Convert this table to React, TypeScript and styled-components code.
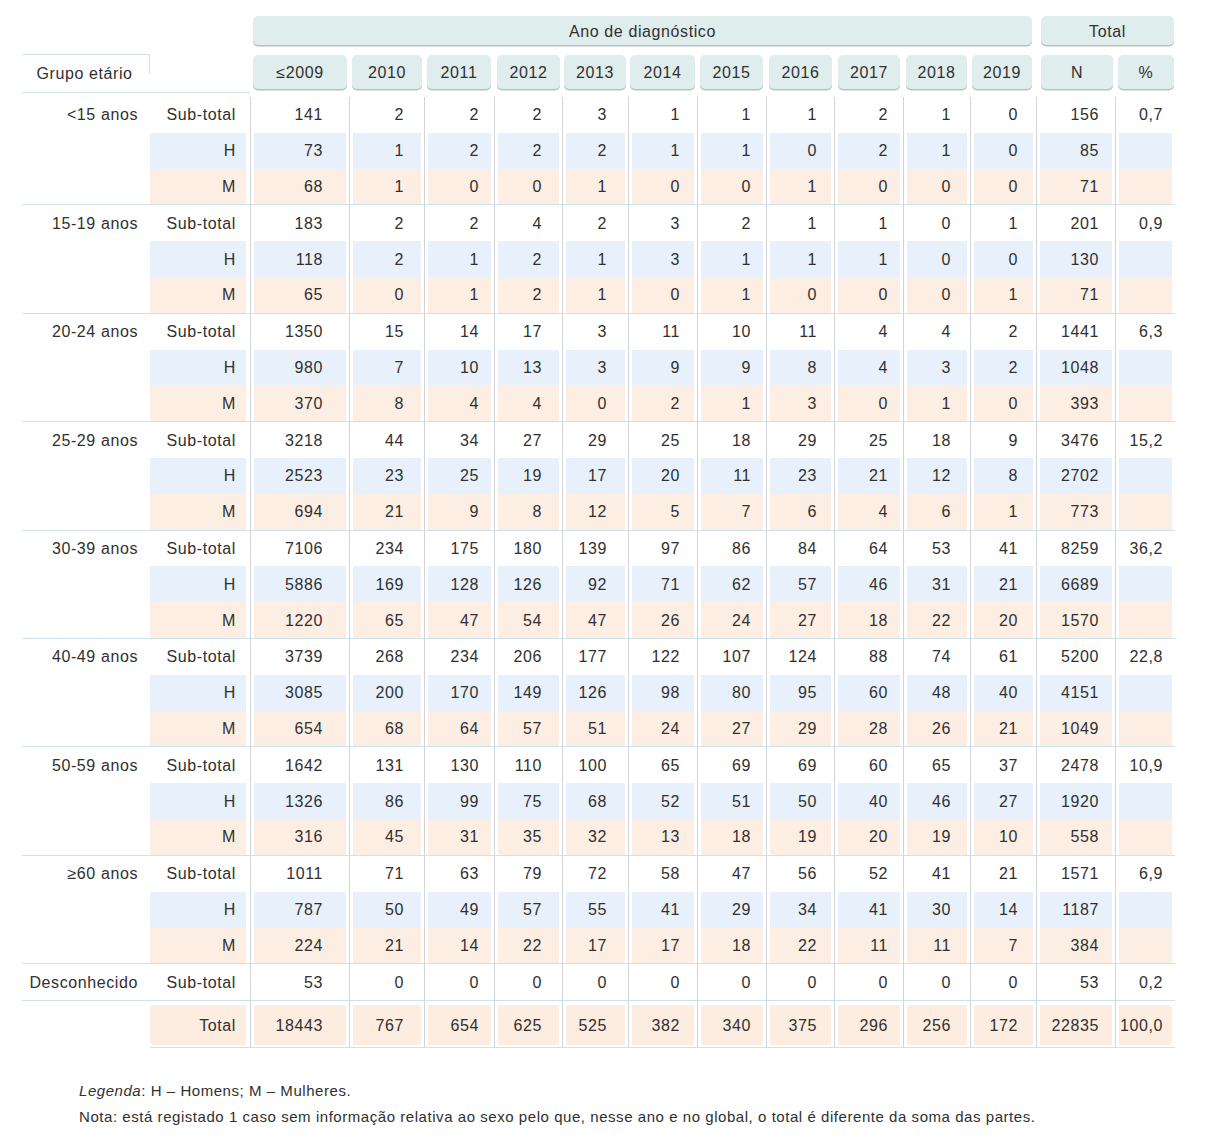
import React from 'react';
import styled, { createGlobalStyle } from 'styled-components';

const GlobalStyle = createGlobalStyle`
  body {
    margin: 0;
    background: #ffffff;
    font-family: "Liberation Sans", Arial, sans-serif;
    color: #303030;
  }
`;

const COLS = '128px 100px 99px 75px 70px 68px 66px 69px 69px 68px 69px 67px 66px 79px 60px';

const YEARS = ['≤2009', '2010', '2011', '2012', '2013', '2014', '2015', '2016', '2017', '2018', '2019', 'N', '%'];
// right padding of the numbers, measured from the column's right edge
const PAD = [26, 20, 15, 20, 21, 17, 15, 17, 15, 19, 18, 16, 12];
// pill insets inside each column [left, right]
const INSET: [number, number][] = [
  [3, 2], [3, 2], [3, 3], [3, 2], [2, 2], [2, 2], [3, 3], [3, 2], [4, 3], [3, 3], [2, 4], [5, 2], [3, 1],
];

const LINE = '#cfe1eb';
const DIVIDER = '#d2d6d9';
const BG = { sub: 'transparent', h: '#e8f1fb', m: '#fdeee3', total: '#fdece0' };

type Kind = 'sub' | 'h' | 'm';

const groups: { label: string; rows: (string | number)[][] }[] = [
  {
    label: '<15 anos',
    rows: [
      [141, 2, 2, 2, 3, 1, 1, 1, 2, 1, 0, 156, '0,7'],
      [73, 1, 2, 2, 2, 1, 1, 0, 2, 1, 0, 85, ''],
      [68, 1, 0, 0, 1, 0, 0, 1, 0, 0, 0, 71, ''],
    ],
  },
  {
    label: '15-19 anos',
    rows: [
      [183, 2, 2, 4, 2, 3, 2, 1, 1, 0, 1, 201, '0,9'],
      [118, 2, 1, 2, 1, 3, 1, 1, 1, 0, 0, 130, ''],
      [65, 0, 1, 2, 1, 0, 1, 0, 0, 0, 1, 71, ''],
    ],
  },
  {
    label: '20-24 anos',
    rows: [
      [1350, 15, 14, 17, 3, 11, 10, 11, 4, 4, 2, 1441, '6,3'],
      [980, 7, 10, 13, 3, 9, 9, 8, 4, 3, 2, 1048, ''],
      [370, 8, 4, 4, 0, 2, 1, 3, 0, 1, 0, 393, ''],
    ],
  },
  {
    label: '25-29 anos',
    rows: [
      [3218, 44, 34, 27, 29, 25, 18, 29, 25, 18, 9, 3476, '15,2'],
      [2523, 23, 25, 19, 17, 20, 11, 23, 21, 12, 8, 2702, ''],
      [694, 21, 9, 8, 12, 5, 7, 6, 4, 6, 1, 773, ''],
    ],
  },
  {
    label: '30-39 anos',
    rows: [
      [7106, 234, 175, 180, 139, 97, 86, 84, 64, 53, 41, 8259, '36,2'],
      [5886, 169, 128, 126, 92, 71, 62, 57, 46, 31, 21, 6689, ''],
      [1220, 65, 47, 54, 47, 26, 24, 27, 18, 22, 20, 1570, ''],
    ],
  },
  {
    label: '40-49 anos',
    rows: [
      [3739, 268, 234, 206, 177, 122, 107, 124, 88, 74, 61, 5200, '22,8'],
      [3085, 200, 170, 149, 126, 98, 80, 95, 60, 48, 40, 4151, ''],
      [654, 68, 64, 57, 51, 24, 27, 29, 28, 26, 21, 1049, ''],
    ],
  },
  {
    label: '50-59 anos',
    rows: [
      [1642, 131, 130, 110, 100, 65, 69, 69, 60, 65, 37, 2478, '10,9'],
      [1326, 86, 99, 75, 68, 52, 51, 50, 40, 46, 27, 1920, ''],
      [316, 45, 31, 35, 32, 13, 18, 19, 20, 19, 10, 558, ''],
    ],
  },
  {
    label: '≥60 anos',
    rows: [
      [1011, 71, 63, 79, 72, 58, 47, 56, 52, 41, 21, 1571, '6,9'],
      [787, 50, 49, 57, 55, 41, 29, 34, 41, 30, 14, 1187, ''],
      [224, 21, 14, 22, 17, 17, 18, 22, 11, 11, 7, 384, ''],
    ],
  },
];

const unknownRow = [53, 0, 0, 0, 0, 0, 0, 0, 0, 0, 0, 53, '0,2'];
const totalRow = [18443, 767, 654, 625, 525, 382, 340, 375, 296, 256, 172, 22835, '100,0'];

const Page = styled.div`
  width: 1206px;
  box-sizing: border-box;
  padding: 16px 0 0 22px;
  font-size: 16px;
  letter-spacing: 0.6px;
`;

const Table = styled.div`
  width: 1153px;
`;

const Row = styled.div`
  display: grid;
  grid-template-columns: ${COLS};
`;

const TopHeader = styled(Row)`
  height: 30px;
  margin-bottom: 8px;
`;

const SubHeader = styled(Row)`
  height: 39px;
`;

const Pill = styled.div<{ $from: number; $to: number; $ml: number; $mr: number }>`
  grid-column: ${(p) => p.$from} / ${(p) => p.$to};
  margin: 0 ${(p) => p.$mr}px 1.5px ${(p) => p.$ml}px;
  padding-top: 3px;
  background: #e0eded;
  border-radius: 5px;
  box-shadow: 0 1.5px 0 #b8c1c1;
  display: flex;
  align-items: center;
  justify-content: center;
`;

const PillCell = styled.div<{ $ml: number; $mr: number }>`
  padding: 1px ${(p) => p.$mr}px 4px ${(p) => p.$ml}px;
  display: flex;
`;

const SmallPill = styled.div`
  flex: 1;
  background: #e0eded;
  border-radius: 5px;
  box-shadow: 0 1.5px 0 #b8c1c1;
  display: flex;
  align-items: center;
  justify-content: center;
  padding-top: 1px;
`;

const GroupTitle = styled.div`
  position: relative;
  border-top: 1px solid ${LINE};
  border-bottom: 1px solid ${LINE};
  display: flex;
  align-items: center;
  justify-content: center;
  padding-right: 3px;

  &::after {
    content: '';
    position: absolute;
    top: 0;
    right: 0;
    width: 1px;
    height: 19px;
    background: ${LINE};
  }
`;

const HeaderBlank = styled.div`
  border-bottom: 1px solid ${LINE};
`;

const Body = styled.div`
  padding-top: 4px;
`;

const Group = styled.div<{ $first?: boolean; $closed?: boolean }>`
  border-top: ${(p) => (p.$first ? 'none' : `1px solid ${LINE}`)};
  border-bottom: ${(p) => (p.$closed ? `1px solid ${LINE}` : 'none')};
`;

const DataRow = styled(Row)<{ $h: number }>`
  height: ${(p) => p.$h}px;
`;

const GroupLabel = styled.div`
  display: flex;
  align-items: center;
  justify-content: flex-end;
  padding: 1px 12px 0 0;
  white-space: nowrap;
`;

const SubLabelCell = styled.div`
  display: flex;
  padding-right: 4px;
`;

const DataCell = styled.div`
  display: flex;
  border-left: 1px solid ${DIVIDER};
  padding: 0 3px;
`;

const Fill = styled.div<{ $bg: string; $pr: number }>`
  flex: 1;
  display: flex;
  align-items: center;
  justify-content: flex-end;
  padding: 1px ${(p) => p.$pr}px 0 0;
  background: ${(p) => p.$bg};
  white-space: nowrap;
`;

const TotalRow = styled(Row)`
  height: 47px;
`;

const TotalLabelCell = styled.div`
  display: flex;
  padding: 4px 4px 2px 0;
  border-bottom: 1px solid ${LINE};
`;

const TotalCell = styled(DataCell)`
  padding: 4px 3px 2px;
  border-bottom: 1px solid ${LINE};
`;

const TotalFill = styled(Fill)<{ $round?: 'left' | 'right' }>`
  border-radius: ${(p) => (p.$round === 'left' ? '4px 0 0 4px' : p.$round === 'right' ? '0 4px 4px 0' : '0')};
`;

const Notes = styled.div`
  margin-top: 30px;
  padding-left: 57px;
  font-size: 15px;
  line-height: 26px;
  letter-spacing: 0.55px;
`;

const SUBLABEL: Record<Kind, string> = { sub: 'Sub-total', h: 'H', m: 'M' };
const KINDS: Kind[] = ['sub', 'h', 'm'];

const Values = ({ values, kind }: { values: (string | number)[]; kind: Kind }) => (
  <>
    {values.map((v, i) => (
      <DataCell key={i}>
        <Fill $bg={BG[kind]} $pr={PAD[i] - 3}>
          {v}
        </Fill>
      </DataCell>
    ))}
  </>
);

const App = () => {
  return (
    <Page>
      <GlobalStyle />
      <Table>
        <TopHeader>
          <Pill $from={3} $to={14} $ml={3} $mr={4}>Ano de diagnóstico</Pill>
          <Pill $from={14} $to={16} $ml={5} $mr={1}>Total</Pill>
        </TopHeader>

        <SubHeader>
          <GroupTitle>Grupo etário</GroupTitle>
          <HeaderBlank />
          {YEARS.map((y, i) => (
            <PillCell key={y} $ml={INSET[i][0]} $mr={INSET[i][1]}>
              <SmallPill>{y}</SmallPill>
            </PillCell>
          ))}
        </SubHeader>

        <Body>
          {groups.map((g, gi) => (
            <Group key={g.label} $first={gi === 0}>
              {g.rows.map((r, ri) => {
                const kind = KINDS[ri];
                return (
                  <DataRow key={ri} $h={35.8}>
                    <GroupLabel>{ri === 0 ? g.label : ''}</GroupLabel>
                    <SubLabelCell>
                      <Fill $bg={BG[kind]} $pr={10}>{SUBLABEL[kind]}</Fill>
                    </SubLabelCell>
                    <Values values={r} kind={kind} />
                  </DataRow>
                );
              })}
            </Group>
          ))}

          <Group $closed>
            <DataRow $h={36}>
              <GroupLabel>Desconhecido</GroupLabel>
              <SubLabelCell>
                <Fill $bg={BG.sub} $pr={10}>Sub-total</Fill>
              </SubLabelCell>
              <Values values={unknownRow} kind="sub" />
            </DataRow>
          </Group>

          <TotalRow>
            <div />
            <TotalLabelCell>
              <TotalFill $bg={BG.total} $pr={10} $round="left">Total</TotalFill>
            </TotalLabelCell>
            {totalRow.map((v, i) => (
              <TotalCell key={i}>
                <TotalFill $bg={BG.total} $pr={PAD[i] - 3} $round={i === 12 ? 'right' : undefined}>
                  {v}
                </TotalFill>
              </TotalCell>
            ))}
          </TotalRow>
        </Body>
      </Table>

      <Notes>
        <div>
          <i>Legenda</i>: H – Homens; M – Mulheres.
        </div>
        <div>
          Nota: está registado 1 caso sem informação relativa ao sexo pelo que, nesse ano e no global, o total é
          diferente da soma das partes.
        </div>
      </Notes>
    </Page>
  );
};

export default App;
